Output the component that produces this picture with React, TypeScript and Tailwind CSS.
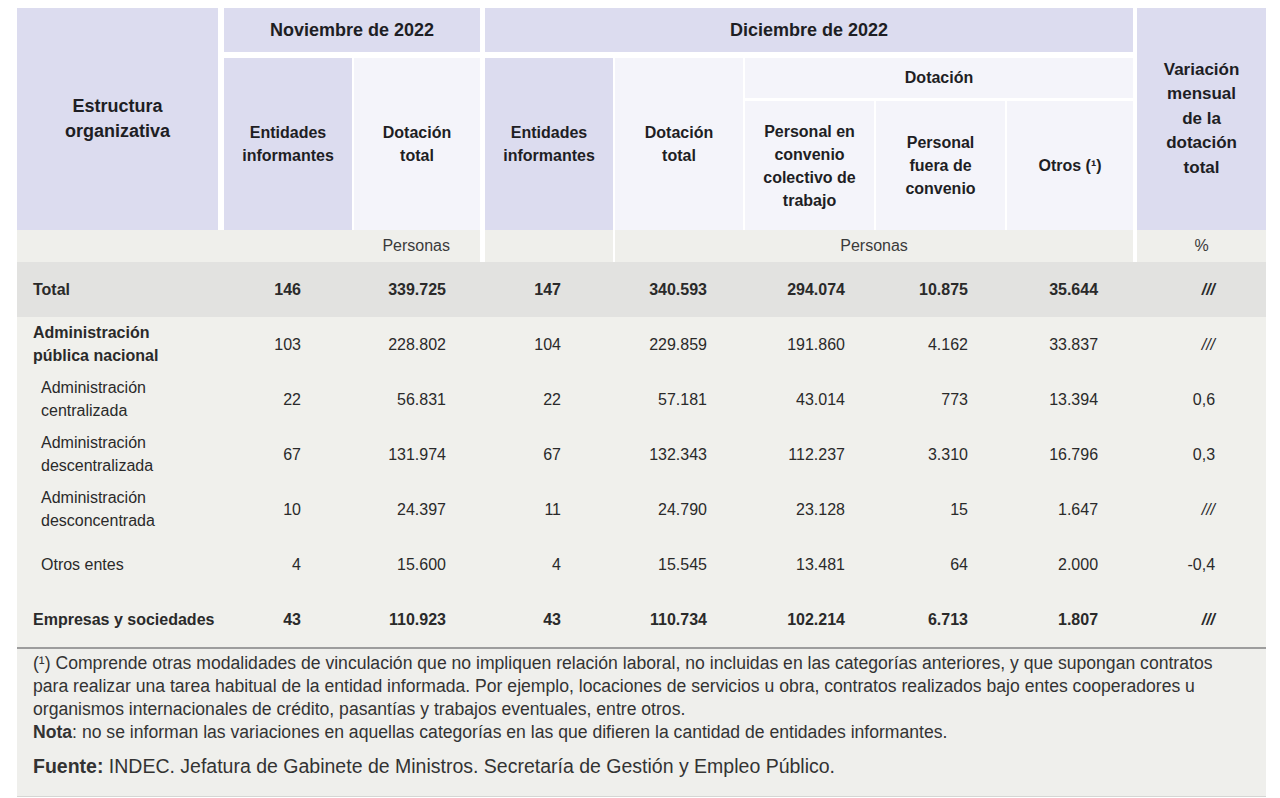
import React from "react";

type Row = {
  label: string[];
  labelBold: boolean;
  numBold: boolean;
  indent: boolean;
  bg: string;
  values: string[];
};

const rows: Row[] = [
  {
    label: ["Total"],
    labelBold: true,
    numBold: true,
    indent: false,
    bg: "bg-[#e2e2e0]",
    values: ["146", "339.725", "147", "340.593", "294.074", "10.875", "35.644", "///"],
  },
  {
    label: ["Administración", "pública nacional"],
    labelBold: true,
    numBold: false,
    indent: false,
    bg: "bg-[#f0f0ec]",
    values: ["103", "228.802", "104", "229.859", "191.860", "4.162", "33.837", "///"],
  },
  {
    label: ["Administración", "centralizada"],
    labelBold: false,
    numBold: false,
    indent: true,
    bg: "bg-[#f0f0ec]",
    values: ["22", "56.831", "22", "57.181", "43.014", "773", "13.394", "0,6"],
  },
  {
    label: ["Administración", "descentralizada"],
    labelBold: false,
    numBold: false,
    indent: true,
    bg: "bg-[#f0f0ec]",
    values: ["67", "131.974", "67", "132.343", "112.237", "3.310", "16.796", "0,3"],
  },
  {
    label: ["Administración", "desconcentrada"],
    labelBold: false,
    numBold: false,
    indent: true,
    bg: "bg-[#f0f0ec]",
    values: ["10", "24.397", "11", "24.790", "23.128", "15", "1.647", "///"],
  },
  {
    label: ["Otros entes"],
    labelBold: false,
    numBold: false,
    indent: true,
    bg: "bg-[#f0f0ec]",
    values: ["4", "15.600", "4", "15.545", "13.481", "64", "2.000", "-0,4"],
  },
  {
    label: ["Empresas y sociedades"],
    labelBold: true,
    numBold: true,
    indent: false,
    bg: "bg-[#f0f0ec]",
    values: ["43", "110.923", "43", "110.734", "102.214", "6.713", "1.807", "///"],
  },
];

// padding derecho de cada columna numérica
const padRight = [
  "pr-[53px]",
  "pr-[39px]",
  "pr-[54px]",
  "pr-[38px]",
  "pr-[31px]",
  "pr-[39px]",
  "pr-[39px]",
  "pr-[51px]",
];

const lav = "bg-[#dcdcef]";
const light = "bg-[#f4f4fa]";
const beige = "bg-[#efefeb]";

export default function App() {
  return (
    <div
      className="min-h-[798px] bg-white pl-[17px] pt-[8px] text-[#1e1e24]"
      style={{ fontFamily: '"Liberation Sans", Arial, sans-serif' }}
    >
      <div className="w-[1249px]">
        <table className="w-full table-fixed border-separate border-spacing-0">
          <colgroup>
            <col className="w-[207px]" />
            <col className="w-[130px]" />
            <col className="w-[131px]" />
            <col className="w-[130px]" />
            <col className="w-[130px]" />
            <col className="w-[131px]" />
            <col className="w-[131px]" />
            <col className="w-[130px]" />
            <col className="w-[129px]" />
          </colgroup>
          <thead>
            <tr>
              <th
                rowSpan={3}
                className={`${lav} border-r-[6px] border-white text-center align-middle text-[18px] font-bold leading-[25px]`}
              >
                Estructura
                <br />
                organizativa
              </th>
              <th
                colSpan={2}
                className={`${lav} h-[50px] border-b-[6px] border-r-[5px] border-white text-center text-[18px] font-bold`}
              >
                Noviembre de 2022
              </th>
              <th
                colSpan={5}
                className={`${lav} h-[50px] border-b-[6px] border-r-[4px] border-white text-center text-[18px] font-bold`}
              >
                Diciembre de 2022
              </th>
              <th
                rowSpan={3}
                className={`${lav} text-center align-middle text-[17px] font-bold leading-[24.5px]`}
              >
                Variación
                <br />
                mensual
                <br />
                de la
                <br />
                dotación
                <br />
                total
              </th>
            </tr>
            <tr>
              <th
                rowSpan={2}
                className={`${lav} border-r-2 border-white text-center text-[16px] font-bold leading-[23px]`}
              >
                Entidades
                <br />
                informantes
              </th>
              <th
                rowSpan={2}
                className={`${light} border-r-[5px] border-white text-center text-[16px] font-bold leading-[23px]`}
              >
                Dotación
                <br />
                total
              </th>
              <th
                rowSpan={2}
                className={`${lav} border-r-2 border-white text-center text-[16px] font-bold leading-[23px]`}
              >
                Entidades
                <br />
                informantes
              </th>
              <th
                rowSpan={2}
                className={`${light} border-r-2 border-white text-center text-[16px] font-bold leading-[23px]`}
              >
                Dotación
                <br />
                total
              </th>
              <th
                colSpan={3}
                className={`${light} h-[43px] border-b-[3px] border-r-[4px] border-white text-center text-[16px] font-bold`}
              >
                Dotación
              </th>
            </tr>
            <tr>
              <th
                className={`${light} h-[129px] border-r-2 border-white text-center text-[16px] font-bold leading-[23px]`}
              >
                Personal en
                <br />
                convenio
                <br />
                colectivo de
                <br />
                trabajo
              </th>
              <th
                className={`${light} border-r-2 border-white text-center text-[16px] font-bold leading-[23px]`}
              >
                Personal
                <br />
                fuera de
                <br />
                convenio
              </th>
              <th
                className={`${light} border-r-[4px] border-white text-center text-[16px] font-bold leading-[23px]`}
              >
                Otros (¹)
              </th>
            </tr>
            <tr className="text-[16px] font-normal text-[#3a3a3a]">
              <td
                colSpan={3}
                className={`${beige} h-[32px] border-r-[5px] border-white pr-[30px] text-right`}
              >
                Personas
              </td>
              <td className={`${beige} border-r-2 border-white`} />
              <td colSpan={4} className={`${beige} border-r-[4px] border-white text-center`}>
                Personas
              </td>
              <td className={`${beige} text-center`}>%</td>
            </tr>
          </thead>
          <tbody className="text-[16px] text-[#2a2a2a]">
            {rows.map((r, i) => (
              <tr key={i} className={r.bg}>
                <td
                  className={`h-[55px] ${r.indent ? "pl-6" : "pl-4"} ${
                    r.labelBold ? "font-bold" : "font-normal"
                  } ${r.label.length > 1 ? "leading-[22.5px]" : ""}`}
                >
                  {r.label.map((l, j) => (
                    <div key={j}>{l}</div>
                  ))}
                </td>
                {r.values.map((v, j) => (
                  <td
                    key={j}
                    className={`text-right ${padRight[j]} ${r.numBold ? "font-bold" : "font-normal"} ${
                      j === 7 && v === "///" ? "italic" : ""
                    }`}
                  >
                    {v}
                  </td>
                ))}
              </tr>
            ))}
          </tbody>
        </table>

        {/* Notas al pie */}
        <div className="whitespace-nowrap border-t-2 border-b border-t-[#9d9d9d] border-b-[#d6d6d4] bg-[#efefec] pl-4 pt-[3px] pb-[18px] text-[17.6px] leading-[23px] text-[#333]">
          <div>
            (¹) Comprende otras modalidades de vinculación que no impliquen relación laboral, no incluidas en las
            categorías anteriores, y que supongan contratos
          </div>
          <div>
            para realizar una tarea habitual de la entidad informada. Por ejemplo, locaciones de servicios u obra,
            contratos realizados bajo entes cooperadores u
          </div>
          <div>organismos internacionales de crédito, pasantías y trabajos eventuales, entre otros.</div>
          <div>
            <span className="font-bold">Nota</span>: no se informan las variaciones en aquellas categorías en las que
            difieren la cantidad de entidades informantes.
          </div>
          <div className="mt-[11px] text-[19.5px]">
            <span className="font-bold">Fuente:</span> INDEC. Jefatura de Gabinete de Ministros. Secretaría de Gestión
            y Empleo Público.
          </div>
        </div>
      </div>
    </div>
  );
}
